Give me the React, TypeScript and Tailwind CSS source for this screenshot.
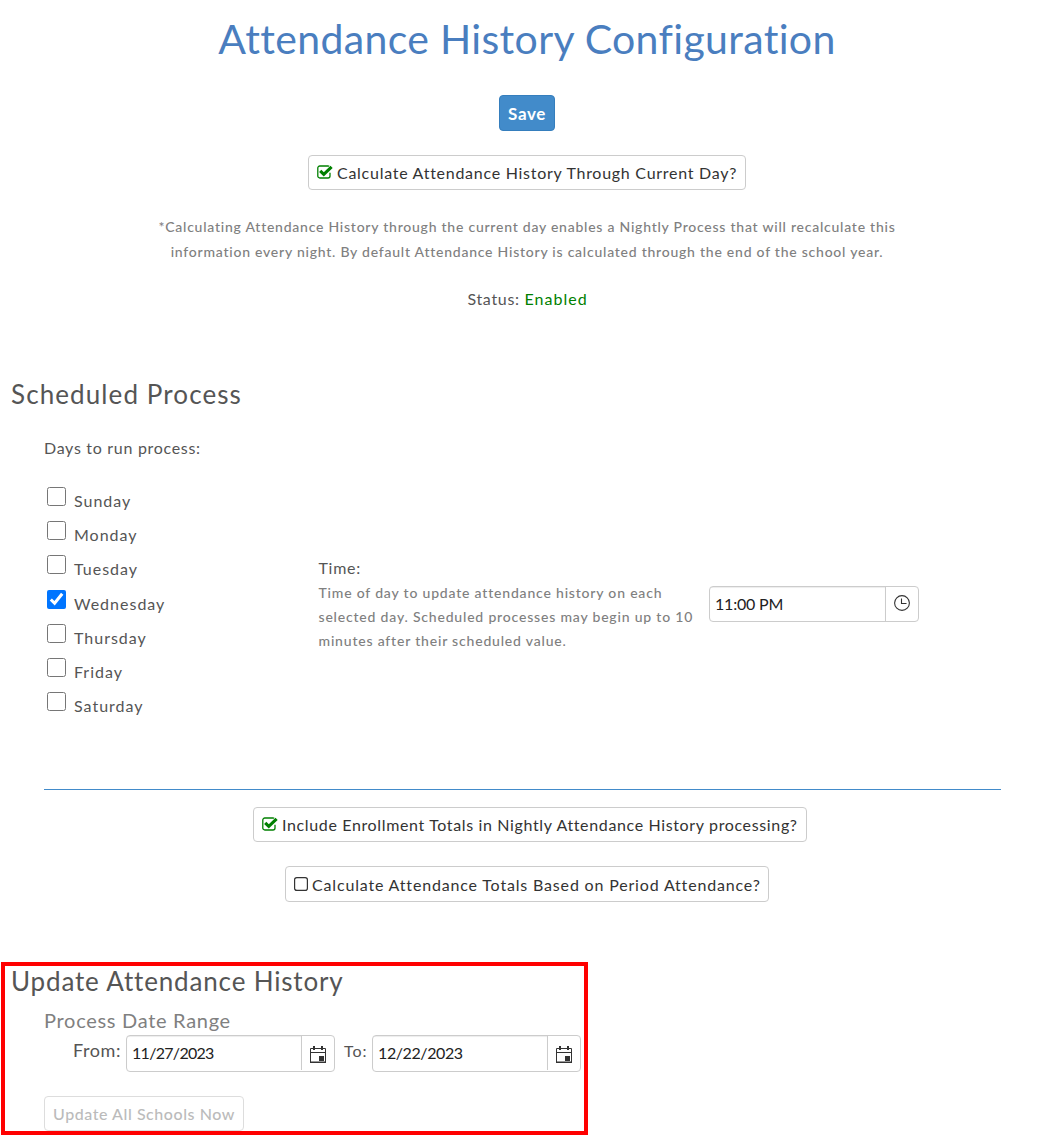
import { useState } from 'react';
import type { ReactNode } from 'react';

const DAYS = ['Sunday', 'Monday', 'Tuesday', 'Wednesday', 'Thursday', 'Friday', 'Saturday'];

function CheckedIcon() {
  return (
    <svg className="w-4 h-[14px] shrink-0 mb-px" viewBox="0 0 16 14" fill="none" stroke="#008000">
      <path d="M13 7.8v3.2a2 2 0 0 1-2 2H2.8a2 2 0 0 1-2-2V3a2 2 0 0 1 2-2H11q.8 0 1.2.3" strokeWidth="1.3" />
      <path d="M3.2 5.8l3.6 3.6L14.6 1.8" strokeWidth="3.1" />
    </svg>
  );
}

function UncheckedIcon() {
  return (
    <svg className="w-[14px] h-[14px] shrink-0" viewBox="0 0 14 14" fill="none" stroke="#333">
      <rect x="0.6" y="0.6" width="12.8" height="12.8" rx="2.2" strokeWidth="1.2" />
    </svg>
  );
}

function ClockIcon() {
  return (
    <svg className="w-4 h-4 mb-0.5" viewBox="0 0 16 16" fill="none" stroke="#333">
      <circle cx="8" cy="8" r="7.4" strokeWidth="1.1" />
      <path d="M7.5 3.5v5h5" strokeWidth="1.1" />
    </svg>
  );
}

function CalendarIcon() {
  return (
    <svg className="w-4 h-[17px] mt-0.5" viewBox="0 0 16 17" fill="none" stroke="#333">
      <path d="M.5 2.5h15v14H.5zM.5 6.5h15" />
      <path d="M4 0v4M12 0v4" strokeWidth="2" />
      <path d="M9 10h5v5H9z" fill="#333" stroke="none" />
      <path d="M0 16.3h16" strokeWidth="1.4" />
    </svg>
  );
}

interface ToggleProps {
  checked?: boolean;
  className: string;
  children: ReactNode;
}

function ToggleButton({ checked, className, children }: ToggleProps) {
  return (
    <button
      type="button"
      className={`flex items-center border border-[#ccc] rounded bg-white pl-2 text-[#333] whitespace-nowrap ${className}`}
    >
      {checked ? <CheckedIcon /> : <UncheckedIcon />}
      <span className="ml-1 pt-px">{children}</span>
    </button>
  );
}

function PickerInput({ value, icon, className }: { value: string; icon: ReactNode; className: string }) {
  return (
    <div className={`flex border border-[#ccc] rounded bg-white overflow-hidden ${className}`}>
      <div className="flex-1 flex items-center pl-[5px] text-[#222] shadow-[inset_0_1px_1px_rgba(0,0,0,0.075)]">
        <span>{value}</span>
      </div>
      <div className="w-[33px] flex items-center justify-center border-l border-[#ccc]">{icon}</div>
    </div>
  );
}

export default function App() {
  const [selected, setSelected] = useState<string[]>(['Wednesday']);

  const toggleDay = (day: string) => {
    setSelected((prev) => (prev.includes(day) ? prev.filter((d) => d !== day) : [...prev, day]));
  };

  return (
    <div className="w-[1044px] h-[1135px] overflow-hidden bg-white font-['Lato',sans-serif] text-base leading-6 text-[#555]">
      <div className="pl-[10px] h-[370px] flex flex-col items-center">
        <h1 className="h-[95px] pt-[3px] text-[41px] leading-[72px] tracking-[0.34px] text-[#4a7ebf]">
          <span>Attendance History Configuration</span>
        </h1>
        <button
          type="button"
          className="w-14 h-9 pt-0.5 rounded border border-[#357ebd] bg-[#428bca] text-white text-[17px] font-bold tracking-[0.6px]"
        >
          Save
        </button>
        <ToggleButton checked className="mt-6 w-[438px] h-[35px] tracking-[0.73px]">
          Calculate Attendance History Through Current Day?
        </ToggleButton>
        <p className="mt-[24px] text-center text-sm leading-[25px] font-medium text-[#808080] tracking-[0.76px]">
          <span>*Calculating Attendance History through the current day enables a Nightly Process that will recalculate this</span>
          <br />
          <span>information every night. By default Attendance History is calculated through the end of the school year.</span>
        </p>
        <p className="mt-[23px] pl-px">
          <span className="tracking-[0.7px]">Status: </span>
          <span className="text-[#008000] tracking-[1px]">Enabled</span>
        </p>
      </div>

      <h2 className="pl-[11px] h-[66px] text-[26px] leading-[48px] tracking-[1.1px]">
        <span>Scheduled Process</span>
      </h2>
      <p className="pl-11 h-[49px] tracking-[0.7px]">
        <span>Days to run process:</span>
      </p>

      <div className="flex h-[304px]">
        <div className="w-[270px] pl-[47px]">
          {DAYS.map((day) => (
            <label key={day} className="flex h-[34.2px]">
              <input
                type="checkbox"
                checked={selected.includes(day)}
                onChange={() => toggleDay(day)}
                className="mt-[2px] w-[19px] h-[19px]"
              />
              <span className="ml-2 mt-[4px] tracking-[1px]">{day}</span>
            </label>
          ))}
        </div>
        <div className="w-[392px] pl-[48.5px] pt-[71px]">
          <p className="tracking-[0.7px]">Time:</p>
          <p className="pt-px text-sm leading-6 font-medium text-[#808080] tracking-[0.81px] whitespace-nowrap">
            <span>Time of day to update attendance history on each</span>
            <br />
            <span>selected day. Scheduled processes may begin up to 10</span>
            <br />
            <span>minutes after their scheduled value.</span>
          </p>
        </div>
        <PickerInput
          value="11:00 PM"
          icon={<ClockIcon />}
          className="ml-[47px] mt-[101px] w-[210px] h-9 tracking-[-0.2px]"
        />
      </div>

      <div className="ml-11 w-[957px] border-t border-[#428bca]" />
      <div className="h-[172px] pt-[17px] pl-[10px] flex flex-col items-center">
        <ToggleButton checked className="ml-1.5 w-[554px] h-[35px] tracking-[0.64px]">
          Include Enrollment Totals in Nightly Attendance History processing?
        </ToggleButton>
        <ToggleButton className="mt-6 w-[484px] h-9 tracking-[0.83px]">
          Calculate Attendance Totals Based on Period Attendance?
        </ToggleButton>
      </div>

      <section className="relative ml-px w-[587px] h-[173px]">
        <h2 className="pl-[10px] h-[46px] text-[26px] leading-[38px] tracking-[0.84px]">
          <span>Update Attendance History</span>
        </h2>
        <h3 className="pl-[43px] h-[27px] text-xl leading-6 text-[#808080] tracking-[0.7px]">
          <span>Process Date Range</span>
        </h3>
        <div className="flex h-[61px]">
          <span className="w-[125px] pl-[72px] pt-[3px] text-lg leading-6 tracking-[0.6px]">From:</span>
          <PickerInput
            value="11/27/2023"
            icon={<CalendarIcon />}
            className="w-[209px] h-[37px] pb-px tracking-[-0.7px]"
          />
          <span className="w-[37px] pl-[9px] pt-1 tracking-[1px]">To:</span>
          <PickerInput
            value="12/22/2023"
            icon={<CalendarIcon />}
            className="w-[209px] h-[37px] pb-px tracking-[-0.4px]"
          />
        </div>
        <button
          type="button"
          disabled
          className="ml-[43px] w-[200px] h-[35px] rounded border border-[#ddd] bg-white text-[#bbb] font-medium tracking-[0.56px]"
        >
          Update All Schools Now
        </button>
        {/* highlight frame drawn over the section */}
        <div className="absolute inset-0 border-4 border-[#f00] pointer-events-none" />
      </section>
    </div>
  );
}
